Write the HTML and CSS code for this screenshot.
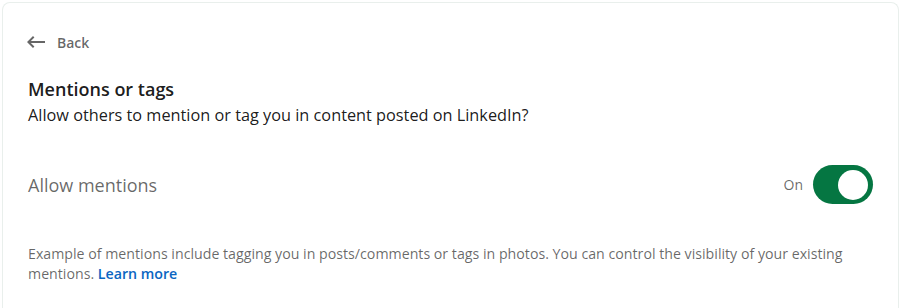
FILE: index.html
```html
<!DOCTYPE html>
<html lang="en">
<head>
<meta charset="utf-8">
<title>Mentions or tags</title>
<link rel="stylesheet" href="styles.css">
</head>
<body>
<main class="card">
  <a class="back" href="#">
    <svg class="back-icon" width="24" height="24" viewBox="0 0 24 24" aria-hidden="true">
      <path d="M21 11H6.83l3.58-3.59L9 6l-6 6 6 6 1.41-1.41L6.83 13H21z" fill="currentColor"/>
    </svg>
    <span>Back</span>
  </a>
  <h1 class="title">Mentions or tags</h1>
  <p class="subtitle">Allow others to mention or tag you in content posted on LinkedIn?</p>
  <div class="setting">
    <span class="setting-label">Allow mentions</span>
    <div class="toggle-wrap">
      <span class="toggle-state">On</span>
      <span class="toggle"><span class="knob"></span></span>
    </div>
  </div>
  <p class="note">Example of mentions include tagging you in posts/comments or tags in photos. You can control the visibility of your existing mentions. <a class="learn" href="#">Learn more</a></p>
</main>
</body>
</html>
```
FILE: styles.css
```css
* { box-sizing: border-box; }
html, body { margin: 0; padding: 0; background: #fff; }
body {
  padding: 2px 3px 0 2px;
  font-family: "Open Sans", "Noto Sans", sans-serif;
  color: rgba(0,0,0,.9);
}
.card {
  border: 1px solid #e9efec;
  border-bottom: none;
  border-radius: 8px 8px 0 0;
  padding: 27px 25px 30px 25px;
  min-height: 306px;
}
.back {
  display: inline-flex;
  align-items: center;
  gap: 9px;
  margin-left: -4px;
  color: rgba(0,0,0,.6);
  text-decoration: none;
  font-size: 14px;
  font-weight: 600;
  height: 24px;
}
.back-icon { display: block; }
.title {
  margin: 15px 0 0;
  font-size: 18px;
  font-weight: 600;
  line-height: 30px;
}
.subtitle {
  margin: 0;
  font-size: 16.3px;
  line-height: 22px;
}
.setting {
  display: flex;
  justify-content: space-between;
  align-items: center;
  margin-top: 39px;
}
.setting-label {
  font-size: 18px;
  color: rgba(0,0,0,.6);
}
.toggle-wrap {
  display: flex;
  align-items: center;
  gap: 10px;
}
.toggle-state {
  font-size: 14px;
  color: rgba(0,0,0,.6);
}
.toggle {
  display: flex;
  align-items: center;
  justify-content: flex-end;
  width: 60px;
  height: 39px;
  padding: 0 5px;
  border-radius: 20px;
  background: #057642;
}
.knob {
  width: 30px;
  height: 30px;
  border-radius: 50%;
  background: #fff;
}
.note {
  margin: 40px 0 0;
  font-size: 14.2px;
  line-height: 20px;
  color: rgba(0,0,0,.6);
}
.learn {
  color: #0a66c2;
  font-weight: 600;
  text-decoration: none;
}
```
